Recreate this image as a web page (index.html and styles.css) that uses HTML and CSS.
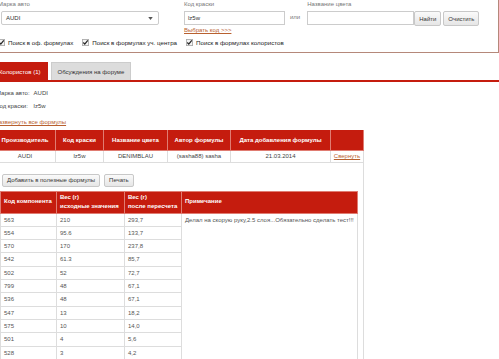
FILE: index.html
```html
<!DOCTYPE html>
<html lang="ru">
    <head>
        <meta charset="UTF-8" />
        <title>Формулы колористов</title>
        <link rel="stylesheet" href="styles.css">
    </head>
    <body>
        <div class="page">
            <div class="search">
                <div class="search-row">
                    <div class="field field-brand">
                        <div class="label">Марка авто</div>
                        <div class="select">
                            <span>AUDI</span>
                            <svg class="caret" viewBox="0 0 6 4"><path d="M0,0H6L3,4Z" /></svg>
                        </div>
                    </div>
                    <div class="field field-code">
                        <div class="label">Код краски</div>
                        <div class="input">lz5w</div>
                        <a class="link pick" href="#">Выбрать код &gt;&gt;&gt;</a>
                    </div>
                    <span class="or">или</span>
                    <div class="field field-color">
                        <div class="label">Название цвета</div>
                        <div class="input"></div>
                    </div>
                    <div class="actions">
                        <button class="btn">Найти</button>
                        <button class="btn">Очистить</button>
                    </div>
                </div>
                <div class="checks">
                    <label class="check"><svg class="box" viewBox="0 0 8 8"><rect x="0.5" y="0.5" width="7" height="7" /><path d="M1.5,4L3.2,5.8L6.6,1.6" /></svg>Поиск в оф. формулах</label>
                    <label class="check"><svg class="box" viewBox="0 0 8 8"><rect x="0.5" y="0.5" width="7" height="7" /><path d="M1.5,4L3.2,5.8L6.6,1.6" /></svg>Поиск в формулах уч. центра</label>
                    <label class="check"><svg class="box" viewBox="0 0 8 8"><rect x="0.5" y="0.5" width="7" height="7" /><path d="M1.5,4L3.2,5.8L6.6,1.6" /></svg>Поиск в формулах колористов</label>
                </div>
            </div>

            <div class="tabs">
                <div class="tab active">Колористов (1)</div>
                <div class="tab">Обсуждения на форуме</div>
            </div>

            <div class="info">
                <span>Марка авто:</span><span>AUDI</span>
                <span>Код краски:</span><span>lz5w</span>
            </div>
            <a class="link expand" href="#">Развернуть все формулы</a>

            <table class="formulas">
                <colgroup>
                    <col style="width: 61px" />
                    <col style="width: 48px" />
                    <col style="width: 64px" />
                    <col style="width: 63px" />
                    <col style="width: 100px" />
                    <col style="width: 33px" />
                </colgroup>
                <thead>
                    <tr>
                        <th>Производитель</th>
                        <th>Код краски</th>
                        <th>Название цвета</th>
                        <th>Автор формулы</th>
                        <th>Дата добавления формулы</th>
                        <th></th>
                    </tr>
                </thead>
                <tbody>
                    <tr class="formula-row">
                        <td>AUDI</td>
                        <td>lz5w</td>
                        <td>DENIMBLAU</td>
                        <td>(sasha88) sasha</td>
                        <td>21.03.2014</td>
                        <td><a class="link" href="#">Свернуть</a></td>
                    </tr>
                    <tr>
                        <td class="detail" colspan="6">
                            <div class="detail-actions">
                                <button class="btn">Добавить в полезные формулы</button>
                                <button class="btn">Печать</button>
                            </div>
                            <table class="components">
                                <colgroup>
                                    <col style="width: 56px" />
                                    <col style="width: 68px" />
                                    <col style="width: 57px" />
                                    <col />
                                </colgroup>
                                <thead>
                                    <tr>
                                        <th>Код компонента</th>
                                        <th>Вес (г)<br />исходные значения</th>
                                        <th>Вес (г)<br />после пересчета</th>
                                        <th>Примечание</th>
                                    </tr>
                                </thead>
                                <tbody>
                                    <tr><td>563</td><td>210</td><td>293,7</td><td class="note" rowspan="11">Делал на скорую руку,2.5 слоя...Обязательно сделать тест!!!</td></tr>
                                    <tr><td>554</td><td>95.6</td><td>133,7</td></tr>
                                    <tr><td>570</td><td>170</td><td>237,8</td></tr>
                                    <tr><td>542</td><td>61.3</td><td>85,7</td></tr>
                                    <tr><td>502</td><td>52</td><td>72,7</td></tr>
                                    <tr><td>799</td><td>48</td><td>67,1</td></tr>
                                    <tr><td>536</td><td>48</td><td>67,1</td></tr>
                                    <tr><td>547</td><td>13</td><td>18,2</td></tr>
                                    <tr><td>575</td><td>10</td><td>14,0</td></tr>
                                    <tr><td>501</td><td>4</td><td>5,6</td></tr>
                                    <tr><td>528</td><td>3</td><td>4,2</td></tr>
                                </tbody>
                            </table>
                        </td>
                    </tr>
                </tbody>
            </table>
        </div>
    </body>
</html>
```

FILE: styles.css
```css
* {
    margin: 0;
    padding: 0;
    box-sizing: border-box;
}

body {
    font-family: "Liberation Sans", Arial, sans-serif;
    font-size: 6px;
    color: #444;
    background: #fff;
    overflow: hidden;
}

.page {
    margin-left: -6px;
    width: 505px;
}

/* search box */

.search {
    height: 53px;
    border-right: 1px solid #b5887a;
    border-bottom: 1px solid #b5887a;
    padding-left: 7px;
}

.search-row {
    display: flex;
    align-items: flex-start;
}

.label {
    color: #777;
    height: 11px;
    line-height: 8px;
    margin-left: -3px;
}

.field-brand {
    width: 183px;
}

.select {
    width: 158px;
    height: 14px;
    border: 1px solid #ccc;
    border-radius: 2px;
    display: flex;
    align-items: center;
    justify-content: space-between;
    padding: 0 5px 0 4px;
    color: #333;
}

.caret {
    width: 5px;
    height: 3px;
    fill: #555;
}

.input {
    width: 101px;
    height: 14px;
    border: 1px solid #ccc;
    padding-left: 3px;
    line-height: 12px;
    color: #333;
}

.field-code .label,
.field-color .label {
    margin-left: 0;
}

.field-color .input {
    width: 107px;
}

.or {
    color: #777;
    margin: 14px 7px 0 5px;
}

.link {
    color: #b8602f;
    text-decoration: underline;
}

.pick {
    display: block;
    margin-top: 1px;
    line-height: 8px;
}

.actions {
    display: flex;
    gap: 2px;
    margin-top: 11px;
}

.btn {
    font-family: inherit;
    font-size: 6px;
    color: #333;
    height: 15px;
    padding: 0 4px;
    border: 1px solid #c8c8c8;
    border-radius: 2px;
    background: linear-gradient(#fafafa, #e6e6e6);
}

.checks {
    display: flex;
    gap: 9px;
    margin-top: 5px;
    margin-left: -3px;
}

.check {
    display: flex;
    align-items: center;
    gap: 3px;
    color: #222;
    font-size: 6.2px;
}

.box {
    width: 7px;
    height: 7px;
}

.box rect {
    fill: #f4f4f4;
    stroke: #aaa;
}

.box path {
    fill: none;
    stroke: #222;
    stroke-width: 1.4;
}

/* tabs */

.tabs {
    display: flex;
    gap: 3px;
    margin-top: 9px;
    border-bottom: 2px solid #c51c0e;
}

.tab {
    height: 18px;
    line-height: 18px;
    padding: 0 6px;
    background: #dcdcdc;
    border: 1px solid #ccc;
    border-bottom: none;
    color: #333;
}

.tab.active {
    background: #c51c0e;
    border-color: #c51c0e;
    color: #fff;
    padding-left: 4px;
}

/* formula info */

.info {
    display: grid;
    grid-template-columns: auto auto;
    justify-content: start;
    column-gap: 4px;
    row-gap: 5px;
    margin: 7px 0 0 2px;
    line-height: 8px;
    color: #444;
}

.expand {
    display: block;
    margin: 8px 0 0 1px;
    line-height: 8px;
}

/* tables */

table {
    border-collapse: collapse;
    table-layout: fixed;
}

.formulas {
    width: 369px;
    margin-top: 4px;
}

.formulas th {
    background: #c51c0e;
    color: #fff;
    font-weight: bold;
    height: 20px;
    border: 1px solid #e07c72;
    border-top: none;
}

.formulas td {
    text-align: center;
    height: 12px;
    border: 1px solid #ddd;
    color: #444;
}

.formulas td.detail {
    text-align: left;
    vertical-align: top;
    padding: 11px 5px 0 5px;
    height: auto;
}

.detail-actions {
    display: flex;
    gap: 4px;
    margin: 0 0 4px 2px;
}

.detail-actions .btn {
    height: 13px;
}

.components {
    width: 358px;
}

.components th {
    background: #c51c0e;
    color: #fff;
    font-weight: bold;
    text-align: left;
    vertical-align: middle;
    line-height: 9.5px;
    padding: 1px 3px;
    border: 1px solid #e07c72;
}

.components td {
    text-align: left;
    line-height: 8.33px;
    padding: 2px 3px;
    border: 1px solid #ddd;
    color: #555;
    white-space: nowrap;
}

.components td.note {
    vertical-align: top;
    padding-top: 2px;
    overflow: hidden;
}
```
